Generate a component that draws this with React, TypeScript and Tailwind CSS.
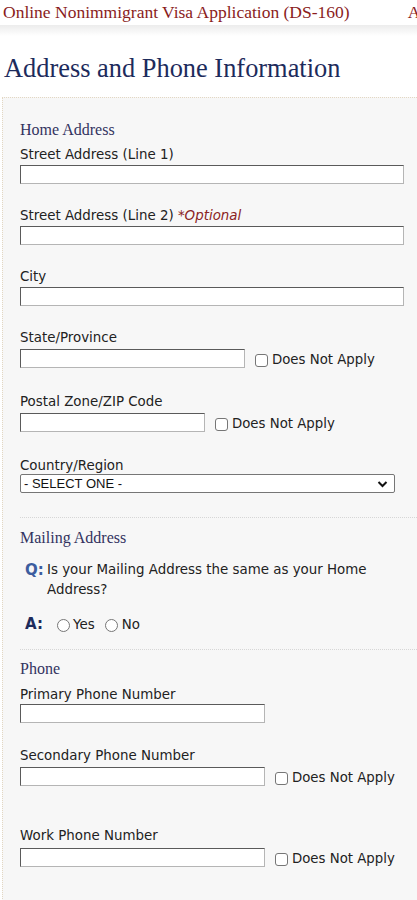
import React from "react";

const serif = "font-['Liberation_Serif','Times_New_Roman',serif]";
const sans = "font-['DejaVu_Sans','Verdana',sans-serif]";

function TextBox({ width, className = "" }: { width: string; className?: string }) {
  return (
    <div
      className={`${width} h-[19px] shrink-0 border border-t-[#5a5a5a] border-l-[#5a5a5a] border-r-[#b5b5b5] border-b-[#b5b5b5] bg-white ${className}`}
    />
  );
}

function CheckBox() {
  return <span className="inline-block h-[13px] w-[13px] shrink-0 rounded-[3px] border border-[#767676] bg-white" />;
}

function Radio() {
  return <span className="inline-block h-[13px] w-[13px] shrink-0 rounded-full border border-[#767676] bg-white" />;
}

function DoesNotApply() {
  return (
    <label className="flex items-center gap-[4px] pt-[3px] text-[13.3px] leading-4 text-[#222]">
      <CheckBox />
      <span>Does Not Apply</span>
    </label>
  );
}

function Label({ children, className = "" }: { children: React.ReactNode; className?: string }) {
  return <div className={`h-4 text-[13.4px] leading-4 text-[#222] ${className}`}>{children}</div>;
}

function SectionTitle({ children, className = "" }: { children: React.ReactNode; className?: string }) {
  return <div className={`${serif} h-5 text-[16px] leading-5 text-[#33335f] ${className}`}>{children}</div>;
}

function Divider({ className = "" }: { className?: string }) {
  return <div className={`border-t border-dotted border-[#d6d6d6] ${className}`} />;
}

export default function App() {
  return (
    <div className={`${sans} w-[417px] h-[900px] overflow-hidden bg-white`}>
      {/* Top bar */}
      <div className={`${serif} flex h-[25px] items-end overflow-hidden whitespace-nowrap pl-[3px] pb-[3px] text-[17.5px] leading-5 text-[#8a1c1c]`}>
        <span>Online Nonimmigrant Visa Application (DS-160)</span>
        <span className="ml-[58px]">Application ID</span>
      </div>
      <div className="h-[11px] bg-gradient-to-b from-[#ececec] to-white" />

      {/* Page title */}
      <h1 className={`${serif} mt-[16px] pl-[4px] text-[26.4px] leading-8 text-[#1d2b5c]`}>
        Address and Phone Information
      </h1>

      {/* Form panel */}
      <div className="mt-[13px] ml-[2px] h-[900px] border-t border-l border-dotted border-[#e3d7c3] bg-[#f7f7f7] pl-[17px] pt-[22px]">
        <SectionTitle>Home Address</SectionTitle>

        <Label className="mt-[7px]">Street Address (Line 1)</Label>
        <TextBox width="w-[384px]" className="mt-[2px]" />

        <Label className="mt-[24px]">
          Street Address (Line 2) <span className="italic text-[#8b2323]">*Optional</span>
        </Label>
        <TextBox width="w-[384px]" className="mt-[2px]" />

        <Label className="mt-[24px]">City</Label>
        <TextBox width="w-[384px]" className="mt-[2px]" />

        <Label className="mt-[24px]">State/Province</Label>
        <div className="mt-[3px] flex items-start gap-[10px]">
          <TextBox width="w-[225px]" />
          <DoesNotApply />
        </div>

        <Label className="mt-[26px]">Postal Zone/ZIP Code</Label>
        <div className="mt-[3px] flex items-start gap-[10px]">
          <TextBox width="w-[185px]" />
          <DoesNotApply />
        </div>

        <Label className="mt-[26px]">Country/Region</Label>
        <div className="flex h-[19px] w-[375px] items-center justify-between rounded-[2px] border border-[#767676] bg-white pl-[3px] pr-[6px]">
          <span className="font-['Liberation_Sans',Arial,sans-serif] text-[13px] leading-4 text-[#111]">- SELECT ONE -</span>
          <svg width="11" height="8" viewBox="0 0 11 8" fill="none">
            <path d="M1.5 2l4 4 4-4" stroke="#111" strokeWidth="2" />
          </svg>
        </div>

        <Divider className="mt-[24px]" />

        <SectionTitle className="mt-[10px]">Mailing Address</SectionTitle>

        <div className="mt-[12px] flex pl-[5px]">
          <span className="w-[22px] shrink-0 text-[15px] font-bold leading-5 text-[#3d5d9f]">Q:</span>
          <span className="w-[340px] text-[13.4px] leading-5 text-[#222]">
            Is your Mailing Address the same as your Home Address?
          </span>
        </div>

        <div className="mt-[14px] flex h-5 items-center pl-[5px] text-[13.4px] text-[#222]">
          <span className="w-[32px] shrink-0 text-[15px] font-bold leading-5 text-[#1d2b5c]">A:</span>
          <label className="flex items-center gap-[3px] pt-[2px]">
            <Radio />
            <span>Yes</span>
          </label>
          <label className="ml-[10px] flex items-center gap-[4px] pt-[2px]">
            <Radio />
            <span>No</span>
          </label>
        </div>

        <Divider className="mt-[15px]" />

        <SectionTitle className="mt-[9px]">Phone</SectionTitle>

        <Label className="mt-[8px]">Primary Phone Number</Label>
        <TextBox width="w-[245px]" className="mt-[1px]" />

        <Label className="mt-[25px]">Secondary Phone Number</Label>
        <div className="mt-[3px] flex items-start gap-[10px]">
          <TextBox width="w-[245px]" />
          <DoesNotApply />
        </div>

        <Label className="mt-[42px]">Work Phone Number</Label>
        <div className="mt-[4px] flex items-start gap-[10px]">
          <TextBox width="w-[245px]" />
          <DoesNotApply />
        </div>
      </div>
    </div>
  );
}
